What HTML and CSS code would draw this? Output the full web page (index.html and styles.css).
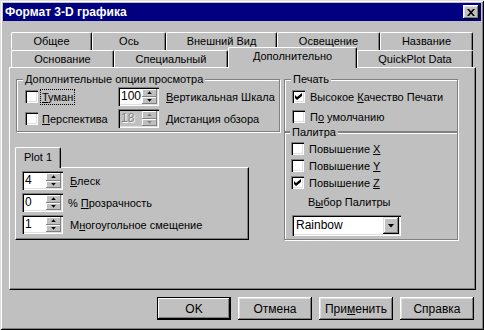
FILE: index.html
```html
<!DOCTYPE html>
<html lang="ru">
<head>
    <meta charset="UTF-8">
    <title>Формат 3-D графика</title>
    <link rel="stylesheet" href="styles.css">
</head>
<body>
    <div class="window">
        <div class="title-bar">
            <span class="title-text">Формат 3-D графика</span>
            <button class="close-btn" type="button">
                <svg width="8" height="7" viewBox="0 0 8 7">
                    <path d="M0 0h2l2 2.3 2-2.3h2l-3 3.5 3 3.5h-2l-2-2.3-2 2.3h-2l3-3.5z" fill="#000"></path>
                </svg>
            </button>
        </div>

        <div class="dialog">
            <div class="tabs">
                <div class="tab-row back">
                    <div class="tab w-general">Общее</div>
                    <div class="tab w-axis">Ось</div>
                    <div class="tab w-look">Внешний Вид</div>
                    <div class="tab w-light">Освещение</div>
                    <div class="tab w-name">Название</div>
                </div>
                <div class="tab-row front">
                    <div class="tab w-base">Основание</div>
                    <div class="tab w-special">Специальный</div>
                    <div class="tab w-extra active">Дополнительно</div>
                    <div class="tab w-quick">QuickPlot Data</div>
                </div>
            </div>

            <div class="tab-panel">
                <div class="col">
                    <fieldset class="group view-group">
                        <legend>Дополнительные опции просмотра</legend>
                        <div class="opt-row">
                            <label class="check">
                                <span class="box"></span>
                                <span class="focus"><u>Т</u>уман</span>
                            </label>
                            <div class="spin">
                                <span class="spin-val">100</span>
                                <span class="spin-btns"><span class="spin-up"></span><span class="spin-down"></span></span>
                            </div>
                            <span class="spin-label"><u>В</u>ертикальная Шкала</span>
                        </div>
                        <div class="opt-row">
                            <label class="check">
                                <span class="box"></span>
                                <span><u>П</u>ерспектива</span>
                            </label>
                            <div class="spin disabled">
                                <span class="spin-val">18</span>
                                <span class="spin-btns"><span class="spin-up"></span><span class="spin-down"></span></span>
                            </div>
                            <span class="spin-label"><u>Д</u>истанция обзора</span>
                        </div>
                    </fieldset>

                    <div class="plot">
                        <div class="plot-tab">Plot 1</div>
                        <div class="plot-panel">
                            <div class="plot-row">
                                <div class="spin">
                                    <span class="spin-val">4</span>
                                    <span class="spin-btns"><span class="spin-up"></span><span class="spin-down"></span></span>
                                </div>
                                <span class="spin-label"><u>Б</u>леск</span>
                            </div>
                            <div class="plot-row">
                                <div class="spin">
                                    <span class="spin-val">0</span>
                                    <span class="spin-btns"><span class="spin-up"></span><span class="spin-down"></span></span>
                                </div>
                                <span class="spin-label pct">% <u>П</u>розрачность</span>
                            </div>
                            <div class="plot-row">
                                <div class="spin">
                                    <span class="spin-val">1</span>
                                    <span class="spin-btns"><span class="spin-up"></span><span class="spin-down"></span></span>
                                </div>
                                <span class="spin-label">М<u>н</u>огоугольное смещение</span>
                            </div>
                        </div>
                    </div>
                </div>

                <div class="col">
                    <fieldset class="group print-group">
                        <legend>Печать</legend>
                        <label class="check row">
                            <span class="box"><svg class="tick" width="7" height="7" viewBox="0 0 7 7"><path d="M0 2L2 4L7 0V3L2 7L0 5Z"></path></svg></span>
                            <span>Высокое <u>К</u>ачество Печати</span>
                        </label>
                        <label class="check row">
                            <span class="box"></span>
                            <span>П<u>о</u> умолчанию</span>
                        </label>
                    </fieldset>

                    <fieldset class="group palette-group">
                        <legend>Палитра</legend>
                        <label class="check row">
                            <span class="box"></span>
                            <span>Повышение <u>X</u></span>
                        </label>
                        <label class="check row">
                            <span class="box"></span>
                            <span>Повышение <u>Y</u></span>
                        </label>
                        <label class="check row">
                            <span class="box"><svg class="tick" width="7" height="7" viewBox="0 0 7 7"><path d="M0 2L2 4L7 0V3L2 7L0 5Z"></path></svg></span>
                            <span>Повышение <u>Z</u></span>
                        </label>
                        <div class="palette-label">В<u>ы</u>бор Палитры</div>
                        <div class="combo">
                            <span class="combo-text">Rainbow</span>
                            <span class="combo-btn"><span class="combo-arrow"></span></span>
                        </div>
                    </fieldset>
                </div>
            </div>

            <div class="buttons">
                <button class="btn default" type="button">OK</button>
                <button class="btn" type="button">Отмена</button>
                <button class="btn" type="button">При<u>м</u>енить</button>
                <button class="btn" type="button">Справка</button>
            </div>
        </div>
    </div>
</body>
</html>
```

FILE: styles.css
```css
* {
    margin: 0;
    padding: 0;
    box-sizing: border-box;
}

body {
    font-family: "Liberation Sans", Arial, sans-serif;
    font-size: 11px;
    color: #000;
    background: #c0c0c0;
}

.window {
    width: 484px;
    height: 330px;
    padding: 3px;
    background: #c0c0c0;
    box-shadow: inset 1px 1px #dfdfdf, inset -1px -1px #000, inset 2px 2px #fff, inset -2px -2px #808080;
}

/* title bar */
.title-bar {
    height: 18px;
    background: #000080;
    display: flex;
    align-items: center;
    justify-content: space-between;
    padding: 0 2px;
}

.title-text {
    color: #fff;
    font-weight: bold;
    font-size: 12px;
}

.close-btn {
    width: 16px;
    height: 14px;
    border: none;
    background: #c0c0c0;
    display: flex;
    align-items: center;
    justify-content: center;
    box-shadow: inset -1px -1px #000, inset 1px 1px #fff, inset -2px -2px #808080, inset 2px 2px #dfdfdf;
}

.dialog {
    padding: 11px 5px 0 6px;
}

/* tabs */
.tabs {
    padding: 0 2px;
}

.tab-row {
    display: flex;
}

.tab-row.back {
    height: 18px;
}

.tab-row.front {
    height: 17px;
}

.tab {
    height: 100%;
    text-align: center;
    line-height: 16px;
    white-space: nowrap;
    border-top: 1px solid #fff;
    border-left: 1px solid #fff;
    border-right: 1px solid #000;
    border-radius: 2px 2px 0 0;
    box-shadow: inset -1px 0 #808080;
    background: #c0c0c0;
}

.tab.active {
    position: relative;
    z-index: 1;
    height: 21px;
    margin-top: -3px;
    line-height: 17px;
}

.w-general { width: 81px; }
.w-axis { width: 74px; }
.w-look { width: 111px; }
.w-light { width: 103px; }
.w-name { width: 93px; }
.w-base { width: 103px; }
.w-special { width: 114px; }
.w-extra { width: 129px; }
.w-quick { width: 116px; }

.tab-panel {
    height: 223px;
    border-top: 1px solid #fff;
    border-left: 1px solid #fff;
    border-right: 1px solid #000;
    border-bottom: 1px solid #000;
    box-shadow: inset -1px -1px #808080;
    padding: 5px 16px 0 6px;
    display: grid;
    grid-template-columns: 264px 174px;
    column-gap: 4px;
    align-items: start;
}

/* group boxes */
.group {
    border: 1px solid #808080;
    box-shadow: 1px 1px 0 #fff, inset 1px 1px 0 #fff;
    min-width: 0;
}

.group legend {
    line-height: 13px;
    padding: 0 2px;
    background: #c0c0c0;
}

.view-group {
    padding: 1px 0 3px 8px;
}

.view-group legend {
    margin-left: -2px;
}

.print-group {
    padding: 2px 6px 6px 7px;
}

.palette-group {
    margin-top: -6px;
    padding: 1px 6px 3px 6px;
}

.print-group legend,
.palette-group legend {
    margin-left: -1px;
}

.opt-row {
    display: flex;
    align-items: center;
    height: 19px;
    white-space: nowrap;
}

.opt-row + .opt-row {
    margin-top: 3px;
}

.opt-row .check {
    width: 93px;
}

.check {
    display: flex;
    align-items: center;
    gap: 4px;
    white-space: nowrap;
}

.check.row {
    height: 17px;
    gap: 5px;
}

.print-group .check.row + .check.row {
    margin-top: 3px;
}

.box {
    width: 13px;
    height: 13px;
    flex-shrink: 0;
    background: #fff;
    display: flex;
    align-items: center;
    justify-content: center;
    box-shadow: inset 1px 1px #808080, inset 2px 2px #000, inset -1px -1px #fff, inset -2px -2px #dfdfdf;
}

.tick {
    display: block;
    fill: #000;
}

.focus {
    outline: 1px dotted #000;
    outline-offset: 1px;
}

/* spin boxes */
.spin {
    width: 41px;
    height: 19px;
    flex-shrink: 0;
    padding: 2px;
    background: #fff;
    display: flex;
    box-shadow: inset 1px 1px #808080, inset 2px 2px #000, inset -1px -1px #fff, inset -2px -2px #dfdfdf;
}

.spin-val {
    flex: 1;
    padding-left: 1px;
    line-height: 15px;
    font-size: 12px;
}

.spin-btns {
    width: 15px;
    display: flex;
    flex-direction: column;
}

.spin-up,
.spin-down {
    flex: 1;
    background: #c0c0c0;
    display: flex;
    align-items: center;
    justify-content: center;
    box-shadow: inset -1px -1px #808080, inset 1px 1px #fff;
}

.spin-up::after,
.spin-down::after {
    content: "";
    width: 5px;
    height: 3px;
    background: #000;
    clip-path: polygon(50% 0, 100% 100%, 0 100%);
}

.spin-down::after {
    clip-path: polygon(0 0, 100% 0, 50% 100%);
}

.spin.disabled {
    background: #c0c0c0;
    color: #808080;
}

.spin.disabled .spin-val {
    text-shadow: 1px 1px #fff;
}

.spin.disabled .spin-up::after,
.spin.disabled .spin-down::after {
    background: #808080;
}

.spin-label {
    margin-left: 7px;
    white-space: nowrap;
}

.spin-label.pct {
    margin-left: 5px;
}

/* plot sub tab */
.plot {
    margin: 15px 0 0 -1px;
}

.plot-tab {
    position: relative;
    width: 46px;
    height: 21px;
    margin-bottom: -1px;
    text-align: center;
    line-height: 18px;
    background: #c0c0c0;
    border-top: 1px solid #fff;
    border-left: 1px solid #fff;
    border-right: 1px solid #000;
    border-radius: 2px 2px 0 0;
    box-shadow: inset -1px 0 #808080;
}

.plot-panel {
    width: 234px;
    height: 73px;
    padding: 3px 0 0 6px;
    border-top: 1px solid #fff;
    border-left: 1px solid #fff;
    border-right: 1px solid #000;
    border-bottom: 1px solid #000;
    box-shadow: inset -1px -1px #808080;
    display: flex;
    flex-direction: column;
    gap: 3px;
}

.plot-row {
    display: flex;
    align-items: center;
}

/* palette */
.palette-label {
    margin: 5px 0 0 17px;
    line-height: 13px;
}

.combo {
    width: 109px;
    height: 21px;
    margin: 6px 0 0 1px;
    padding: 2px;
    background: #fff;
    display: flex;
    box-shadow: inset 1px 1px #808080, inset 2px 2px #000, inset -1px -1px #fff, inset -2px -2px #dfdfdf;
}

.combo-text {
    flex: 1;
    padding-left: 2px;
    line-height: 17px;
    font-size: 12px;
}

.combo-btn {
    width: 16px;
    background: #c0c0c0;
    display: flex;
    align-items: center;
    justify-content: center;
    box-shadow: inset -1px -1px #000, inset 1px 1px #dfdfdf, inset -2px -2px #808080, inset 2px 2px #fff;
}

.combo-arrow {
    width: 7px;
    height: 4px;
    background: #000;
    clip-path: polygon(0 0, 100% 0, 50% 100%);
}

/* dialog buttons */
.buttons {
    display: flex;
    justify-content: flex-end;
    gap: 7px;
    margin-top: 7px;
    padding-right: 2px;
}

.btn {
    width: 74px;
    height: 23px;
    border: none;
    background: #c0c0c0;
    font-family: inherit;
    font-size: 12px;
    color: #000;
    box-shadow: inset -1px -1px #000, inset 1px 1px #fff, inset -2px -2px #808080, inset 2px 2px #dfdfdf;
}

.btn.default {
    border: 1px solid #000;
    box-shadow: inset -1px -1px #000, inset 1px 1px #fff, inset -2px -2px #808080;
}
```
